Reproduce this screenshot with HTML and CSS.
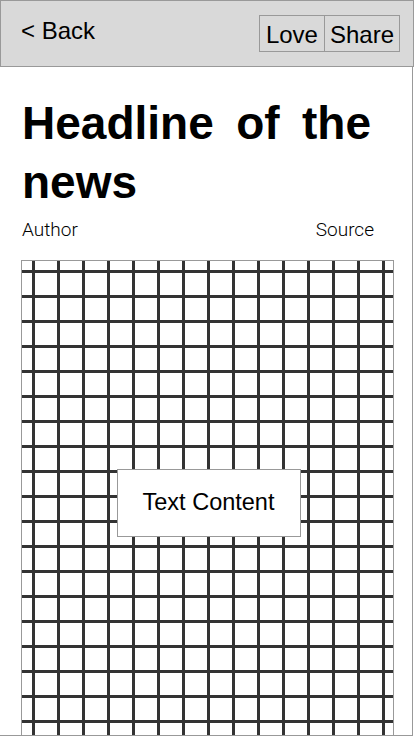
FILE: index.html
```html
<!DOCTYPE html>
<html lang="en">
<head>
    <meta charset="UTF-8">
    <meta name="viewport" content="width=device-width, initial-scale=1.0">
    <title>News</title>
    <link rel="stylesheet" href="styles.css">
</head>
<body>
    <header class="topbar">
        <a class="back" href="#">&lt; Back</a>
        <div class="actions">
            <button class="btn">Love</button>
            <button class="btn">Share</button>
        </div>
    </header>

    <main class="page">
        <h1 class="headline">Headline of the news</h1>
        <div class="meta">
            <span>Author</span>
            <span>Source</span>
        </div>
        <div class="picture">
            <div class="text-box">Text Content</div>
        </div>
    </main>
</body>
</html>
```

FILE: styles.css
```css
* { box-sizing: border-box; }
body {
    margin: 0;
    font-family: "Liberation Sans", Arial, sans-serif;
    color: #000;
    background: #fff;
    width: 414px;
    height: 736px;
    overflow: hidden;
}
.topbar {
    height: 67px;
    background: #d9d9d9;
    border: 1px solid #999;
    display: flex;
    align-items: center;
    justify-content: space-between;
    padding: 0 13px 0 20px;
}
.back {
    color: #000;
    text-decoration: none;
    font-size: 24px;
    margin-top: -6px;
}
.actions {
    display: flex;
    border: 1px solid #999;
}
.btn {
    font-family: inherit;
    font-size: 24px;
    color: #000;
    background: none;
    border: none;
    height: 35px;
    padding: 2px 6px 0;
}
.btn + .btn { border-left: 1px solid #999; padding: 2px 5px 0 5px; }
.page {
    height: 669px;
    width: 413px;
    border-right: 1px solid #999;
    border-bottom: 1px solid #999;
    overflow: hidden;
    padding: 27px 0 0 21px;
}
.headline {
    margin: 0 41px 0 1px;
    font-size: 46px;
    line-height: 59px;
    font-weight: bold;
    text-align: justify;
    text-align-last: left;
}
.meta {
    display: flex;
    justify-content: space-between;
    margin: 0 38px 0 1px;
    font-family: Roboto, "Liberation Sans", sans-serif;
    font-weight: 300;
    font-size: 19px;
    line-height: 24px;
    padding-top: 6px;
}
.picture {
    margin-top: 18px;
    width: 373px;
    height: 485px;
    border: 1px solid #999;
    background-color: #fff;
    background-image:
        linear-gradient(to right, #333 3px, transparent 3px),
        linear-gradient(to bottom, #333 3px, transparent 3px);
    background-size: 25px 25px;
    background-position: 10px 9px;
    display: flex;
    align-items: center;
    justify-content: center;
}
.text-box {
    width: 184px;
    height: 68px;
    background: #fff;
    border: 1px solid #999;
    display: flex;
    align-items: center;
    justify-content: center;
    font-size: 23.5px;
    margin-left: 2px;
}
```
